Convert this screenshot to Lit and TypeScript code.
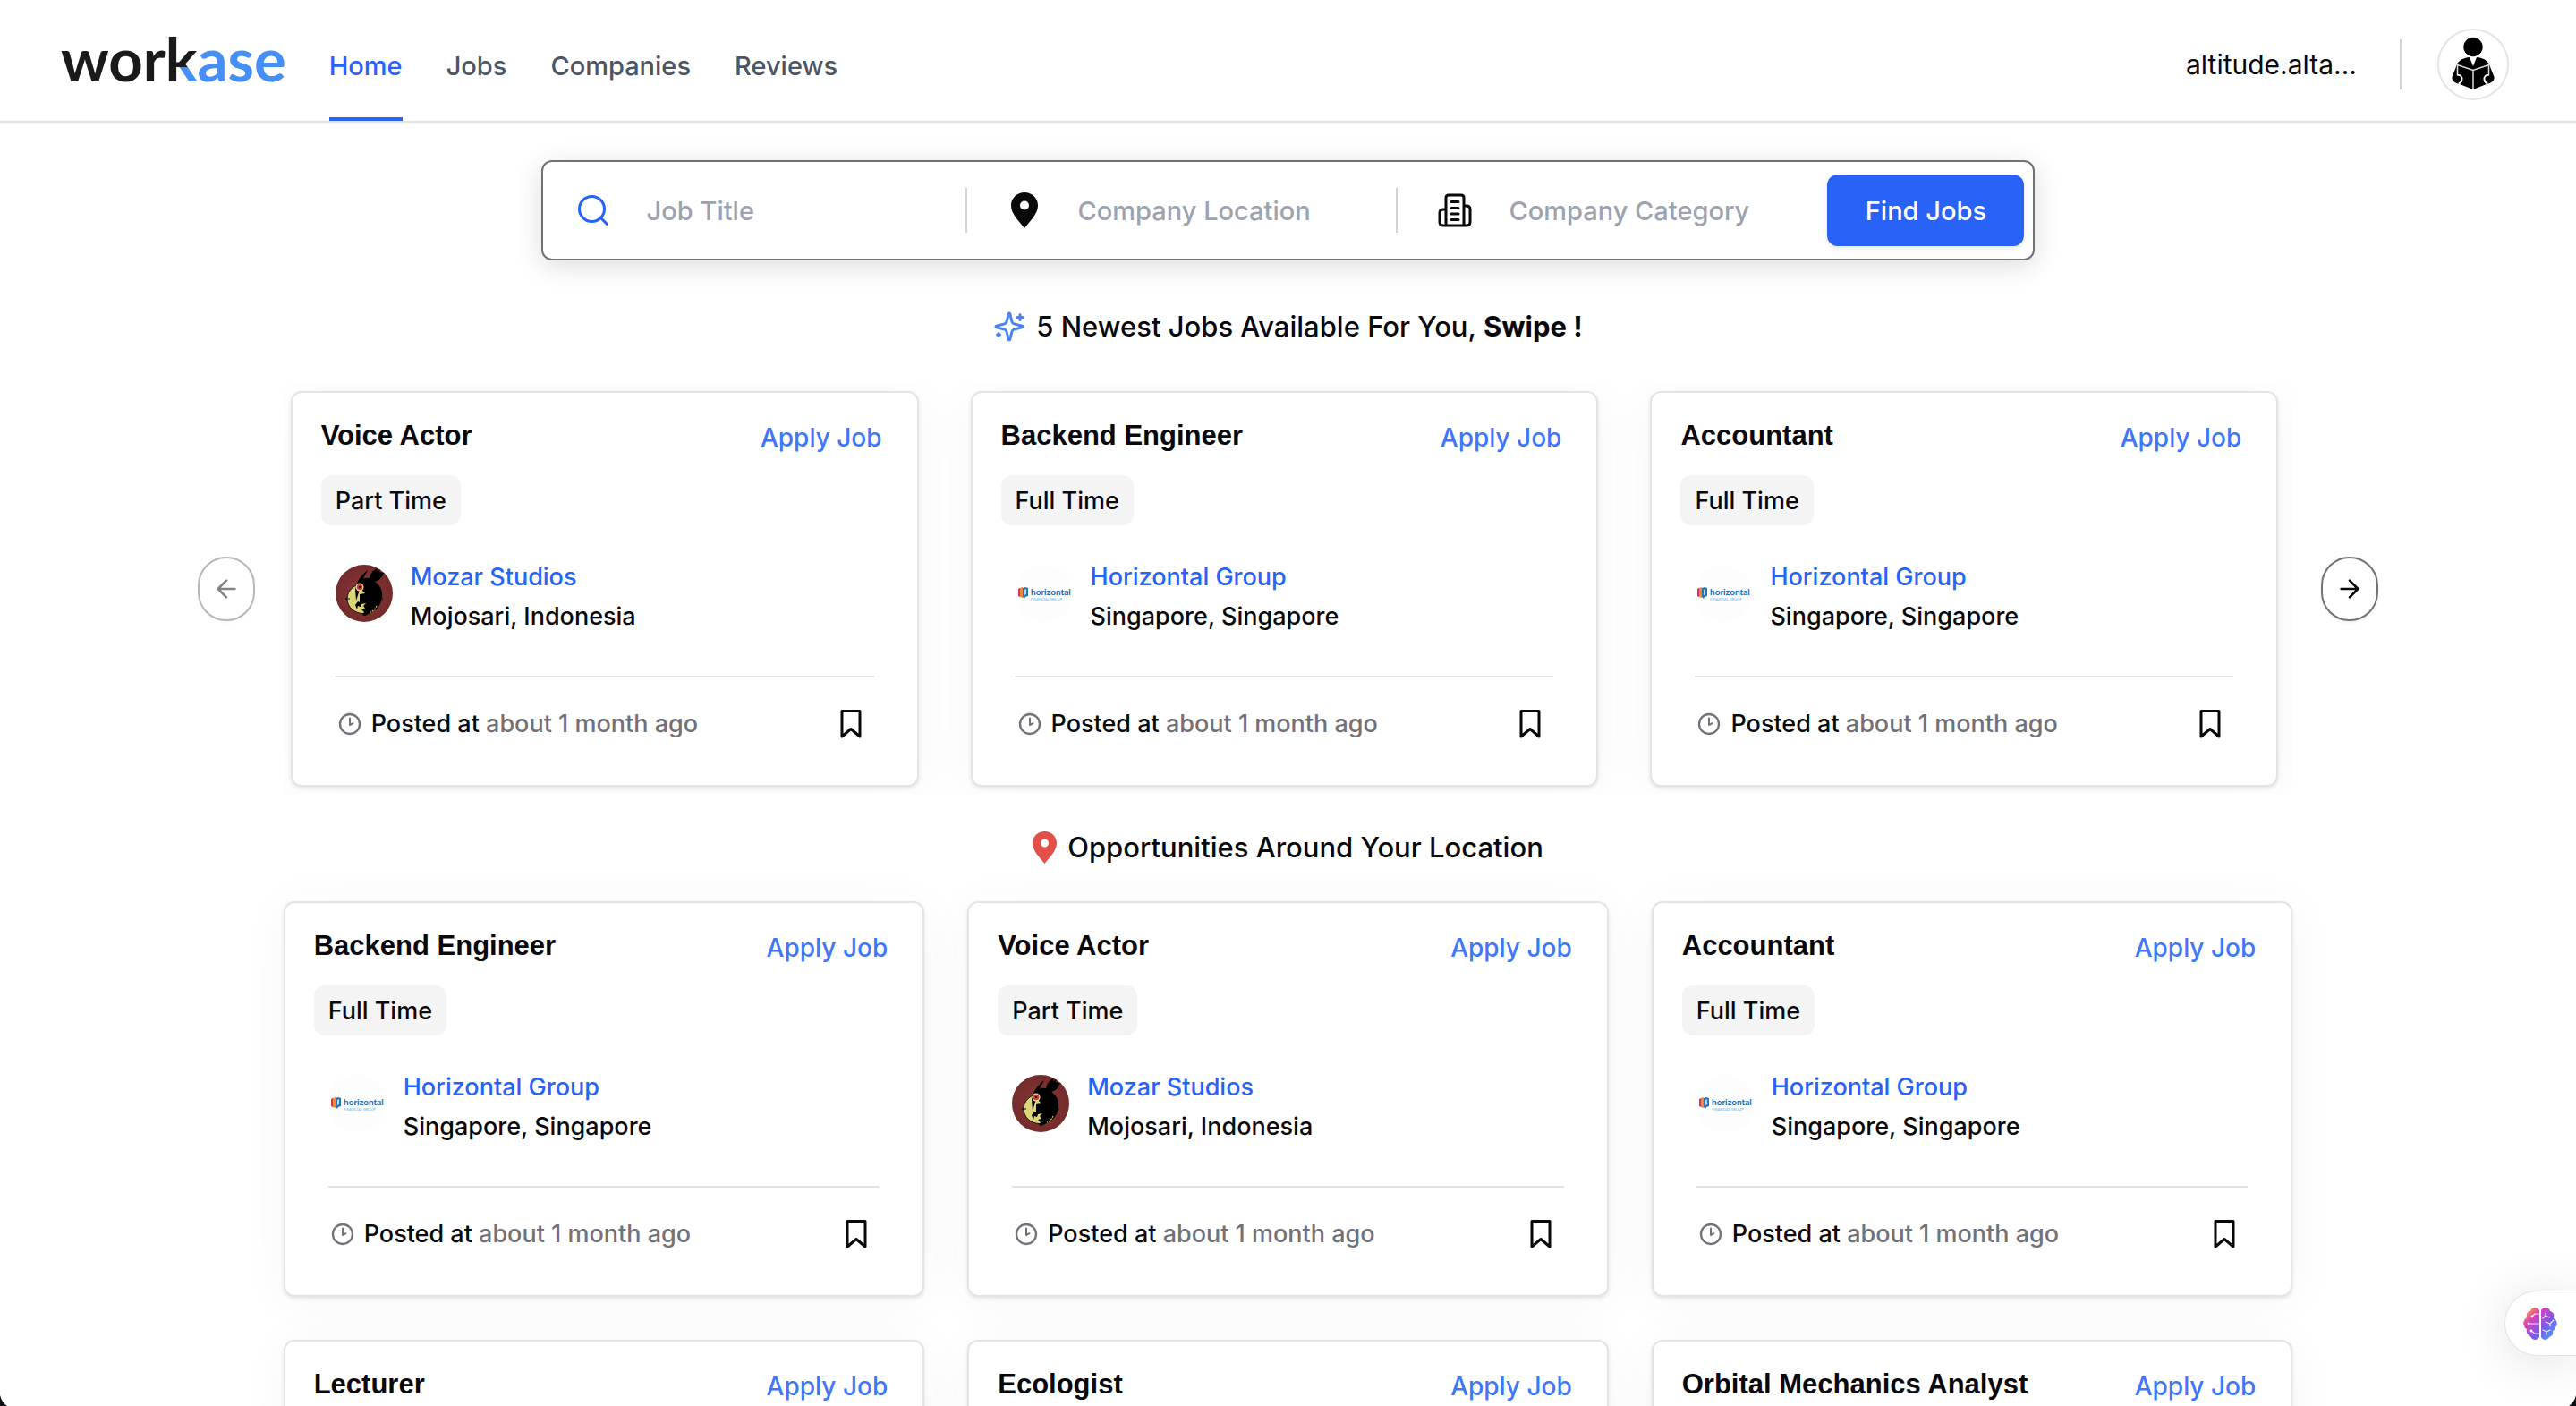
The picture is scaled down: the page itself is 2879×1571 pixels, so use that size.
import { LitElement, html, svg, css, nothing } from "lit";
import { customElement, property, state } from "lit/decorators.js";
import { classMap } from "lit/directives/class-map.js";

interface Job {
  title: string;
  type: string;
  company: string;
  place: string;
  logo: "mozar" | "horizontal";
}

const voiceActor: Job = { title: "Voice Actor", type: "Part Time", company: "Mozar Studios", place: "Mojosari, Indonesia", logo: "mozar" };
const horizontalJob = (title: string): Job => ({
  title,
  type: "Full Time",
  company: "Horizontal Group",
  place: "Singapore, Singapore",
  logo: "horizontal",
});

const newest: Job[] = [voiceActor, horizontalJob("Backend Engineer"), horizontalJob("Accountant")];
const nearby: Job[] = [
  horizontalJob("Backend Engineer"),
  voiceActor,
  horizontalJob("Accountant"),
  horizontalJob("Lecturer"),
  horizontalJob("Ecologist"),
  horizontalJob("Orbital Mechanics Analyst"),
];

const mozarLogo = html`<svg class="logo" width="64" height="64" viewBox="0 0 64 64" aria-hidden="true">
  <defs>
    <radialGradient id="red"><stop offset="0" stop-color="#8c3a37" /><stop offset="1" stop-color="#732b2b" /></radialGradient>
  </defs>
  <circle cx="32" cy="32" r="32" fill="url(#red)" />
  <ellipse cx="31" cy="38" rx="18" ry="16.5" fill="#ddd676" stroke="#14100a" stroke-width="1" />
  <path d="M36 6C29 11 24 18 22 27l1 13 3-9 2-9c2-5 5-10 8-16z" fill="#000" />
  <path d="M38 15c1-6 6-11 9-11l-1 3 4-2-1 3 5 1c-2 6-6 9-10 10 6 4 9 10 8 18-1 8-6 13-11 16l-8 4-3-1 2-3-3-3 4-1-2-3 3-3-5 1-1 3-3-1-1 4-2-5 3-4 2 1v-9l6-1-4-4 1-5-3-3c2-4 6-6 10-5z" fill="#000" />
  <path d="M46 46c-1 3-4 6-7 7" stroke="#c9c264" stroke-width="1.200" stroke-dasharray="2 1" fill="none" />
  <circle cx="27" cy="25" r="4.500" fill="#e9d9b0" />
  <circle cx="27" cy="25" r="3.200" fill="#d2402a" />
  <circle cx="27" cy="25" r="1.300" fill="#1b0b08" />
  <path d="M11 38h5M50 38h3" stroke="#000" stroke-width="1" />
</svg>`;

const horizontalLogo = html`<svg class="logo" width="64" height="64" viewBox="0 0 64 64" aria-hidden="true">
  <circle cx="32" cy="32" r="32" fill="#fdfdfd" />
  <path d="M3 27l2-1v10l-2-1z" fill="#d8315b" />
  <path d="M5 26l3-1v12l-3-1z" fill="#f0883a" />
  <path d="M8 26l3-1 3 1v9l-3 1-1 2-2-2z" fill="#2a73b8" />
  <path d="M10 28l2-1v6l-2 1z" fill="#bcdcf2" />
  <text x="17" y="34" font-family="Lato, sans-serif" font-size="10" font-weight="700" fill="#1f6bb0">horizontal</text>
  <text x="17" y="40" font-family="Lato, sans-serif" font-size="4" font-weight="400" fill="#6fb3dd">FINANCIAL GROUP</text>
</svg>`;

const clockIcon = html`<svg width="32" height="32" viewBox="0 0 32 32" fill="none" stroke="#71717a" stroke-width="2.300" stroke-linecap="round" stroke-linejoin="round" aria-hidden="true">
  <circle cx="16" cy="16" r="11" />
  <path d="M16 9.500v7.500l3.500-1.800" stroke-width="2" />
</svg>`;

const bookmarkIcon = html`<svg width="24" height="34" viewBox="0 0 24 34" fill="none" stroke="#09090b" stroke-width="3" stroke-linejoin="round" aria-hidden="true">
  <path d="M2 2.500h20v28.500l-10-8.500-10 8.500z" />
</svg>`;

const arrow = (right: boolean) => html`<svg width="32" height="32" viewBox="0 0 24 24" fill="none" stroke="#09090b" stroke-width="2" stroke-linecap="round" stroke-linejoin="round" aria-hidden="true">
  ${right ? svg`<path d="M5 12h14M12 5l7 7-7 7" />` : svg`<path d="M19 12H5M12 19l-7-7 7-7" />`}
</svg>`;

const pinPath = "M15 0C6.500 0 0 6.500 0 14.500 0 24 8 31 15 40c7-9 15-16 15-25.500C30 6.500 23.500 0 15 0zm0 9.500a5 5 0 1 1 0 10 5 5 0 0 1 0-10z";

@customElement("job-card")
export class JobCard extends LitElement {
  @property({ attribute: false }) job!: Job;

  static styles = css`
    :host {
      display: block;
      box-sizing: border-box;
      min-width: 0;
      padding: 28px 32px 48px;
      background: #fff;
      border: 2px solid #e4e4e5;
      border-radius: 12px;
      box-shadow: 0 2px 4px rgba(0, 0, 0, 0.09), 0 6px 60px rgba(0, 0, 0, 0.04);
      font-size: 27px;
      line-height: 44px;
    }
    .head {
      display: flex;
      align-items: flex-start;
      justify-content: space-between;
      gap: 16px;
      height: 40px;
      margin-right: 7px;
    }
    .title {
      margin: 0;
      font: 700 31px/40px "Liberation Sans", Arial, sans-serif;
    }
    .apply {
      color: #3f77f9;
      font-size: 28px;
      text-decoration: none;
      white-space: nowrap;
    }
    .type {
      display: inline-block;
      margin-top: 24px;
      padding: 2px 16px 0;
      background: #f4f4f4;
      border-radius: 12px;
      line-height: 54px;
      vertical-align: top;
    }
    .inner {
      margin-top: 36px;
      padding: 0 16px;
    }
    .company {
      display: flex;
      align-items: flex-start;
      gap: 20px;
      padding-bottom: 44px;
      border-bottom: 2px solid #e4e4e5;
    }
    .logo {
      margin-top: 8px;
    }
    .who {
      display: flex;
      flex-direction: column;
    }
    .name {
      color: #2663f9;
      text-decoration: none;
    }
    .foot {
      display: flex;
      align-items: center;
      gap: 8px;
      min-height: 40px;
      padding: 32px 14px 0 0;
      line-height: 40px;
    }
    .ago {
      color: #71717a;
    }
    .save {
      display: flex;
      margin-left: auto;
      padding: 0;
      border: 0;
      background: none;
    }
  `;

  render() {
    const { title, type, company, place, logo } = this.job;
    return html`
      <div class="head">
        <h3 class="title">${title}</h3>
        <a class="apply" href="#apply">Apply Job</a>
      </div>
      <span class="type">${type}</span>
      <div class="inner">
        <div class="company">
          ${logo === "mozar" ? mozarLogo : horizontalLogo}
          <div class="who">
            <a class="name" href="#company">${company}</a>
            <span>${place}</span>
          </div>
        </div>
        <div class="foot">
          ${clockIcon}
          <span>Posted at <span class="ago">about 1 month ago</span></span>
          <button class="save" aria-label="Save job">${bookmarkIcon}</button>
        </div>
      </div>
    `;
  }
}

@customElement("app-root")
export class AppRoot extends LitElement {
  @state() private current = "Home";

  static styles = css`
    :host {
      display: block;
      height: 100vh;
      overflow-y: auto;
      scrollbar-width: none;
      background: #fff;
      color: #09090b;
      font-family: Inter, "Liberation Sans", sans-serif;
      font-size: 29px;
      font-weight: 500;
    }
    .bar {
      display: flex;
      align-items: stretch;
      height: 135px;
      padding: 0 75px 0 68px;
      border-bottom: 2px solid #e4e4e5;
    }
    .brand {
      align-self: center;
      margin-right: 48px;
      padding-bottom: 6px;
      color: #1a1a1a;
      font: 700 67px/80px Lato, sans-serif;
      text-decoration: none;
    }
    .brand-k {
      background: linear-gradient(#478ff8, #478ff8) 100% 100% / 56% 30px no-repeat #1a1a1a;
      background-clip: text;
      -webkit-background-clip: text;
      color: transparent;
    }
    .brand-end {
      color: #478ff8;
    }
    .nav {
      display: flex;
      gap: 49px;
    }
    .link {
      display: flex;
      align-items: center;
      padding-top: 16px;
      border-bottom: 4px solid transparent;
      color: #4b5563;
      text-decoration: none;
    }
    .link.on {
      border-color: #2663f9;
      color: #2663f9;
    }
    .account {
      display: flex;
      align-items: center;
      margin-left: auto;
      padding-top: 8px;
      font-size: 30px;
      font-weight: 400;
    }
    .rule {
      width: 2px;
      height: 56px;
      margin: 0 40px 0 48px;
      background: #d1d5db;
    }
    .avatar {
      display: flex;
      padding: 0;
      border: 0;
      background: none;
    }
    .search {
      display: flex;
      align-items: center;
      box-sizing: border-box;
      width: 58%;
      height: 112px;
      margin: 42px auto 0;
      padding-right: 10px;
      border: 2px solid #71717a;
      border-radius: 12px;
      background: #fff;
      box-shadow: 0 6px 30px rgba(0, 0, 0, 0.14);
    }
    .field {
      display: flex;
      flex: 1 1 auto;
      align-items: center;
      gap: 40px;
      height: 50px;
      padding-left: 36px;
    }
    .field + .field {
      padding-left: 44px;
      border-left: 2px solid #d1d5db;
    }
    .icon {
      display: flex;
      flex: none;
      justify-content: center;
      width: 40px;
    }
    .input {
      flex: 1 1 auto;
      width: 200px;
      min-width: 0;
      padding: 0;
      border: 0;
      outline: 0;
      background: none;
      color: inherit;
      font: inherit;
    }
    .input::placeholder {
      color: #9ca3af;
      opacity: 1;
    }
    .find {
      flex: none;
      width: 220px;
      height: 80px;
      border: 0;
      border-radius: 12px;
      background: #2962f6;
      box-shadow: 0 2px 6px rgba(0, 0, 0, 0.1);
      color: #fff;
      font: inherit;
    }
    .heading {
      display: flex;
      align-items: center;
      justify-content: center;
      gap: 12px;
      margin: 0;
      font-size: 31px;
      font-weight: 500;
      line-height: 40px;
    }
    .heading-new {
      margin-top: 54px;
    }
    .heading-near {
      margin-top: 40px;
    }
    .carousel {
      display: flex;
      align-items: center;
      justify-content: center;
      gap: 32px;
      margin-top: 44px;
    }
    .step {
      display: flex;
      flex: none;
      align-items: center;
      justify-content: center;
      box-sizing: border-box;
      width: 64px;
      height: 72px;
      padding: 0;
      border: 2px solid #71717a;
      border-radius: 36px;
      background: #fff;
      box-shadow: 0 2px 4px rgba(0, 0, 0, 0.06);
    }
    .step:disabled {
      opacity: 0.5;
    }
    .cards {
      display: grid;
      grid-template-columns: repeat(3, minmax(0, 1fr));
      box-sizing: border-box;
      width: 78%;
    }
    .slides {
      gap: 58px;
      overflow: hidden;
      padding: 8px 16px 8px 8px;
    }
    .near {
      gap: 48px;
      margin: 40px auto 48px;
    }
    .assistant {
      position: fixed;
      right: 0;
      bottom: 56px;
      display: flex;
      align-items: center;
      box-sizing: border-box;
      width: 80px;
      height: 73px;
      padding: 0 0 0 20px;
      border: 1px solid #e4e4e5;
      border-right: 0;
      border-radius: 37px 0 0 37px;
      background: #fff;
      box-shadow: 0 6px 60px rgba(0, 0, 0, 0.12);
    }
    .corner {
      position: fixed;
      right: 0;
      bottom: 0;
    }
    .corner.left {
      right: auto;
      left: 0;
    }
  `;

  private corner(left: boolean) {
    return html`<svg class=${classMap({ corner: true, left })} width="8" height="12" viewBox="0 0 8 12" aria-hidden="true">
      <path d=${left ? "M0 0Q2 8 8 12H0z" : "M8 0Q6 8 0 12H8z"} fill="#0b1215" />
    </svg>`;
  }

  private field(id: string, label: string, icon: unknown) {
    return html`<label class="field" for=${id}>
      <span class="icon">${icon}</span>
      <input class="input" id=${id} type="text" placeholder=${label} aria-label=${label} />
    </label>`;
  }

  render() {
    return html`
      <header class="bar">
        <a class="brand" href="#home">wor<span class="brand-k">k</span><span class="brand-end">ase</span></a>
        <nav class="nav">
          ${["Home", "Jobs", "Companies", "Reviews"].map(
            (name) => html`<a
              class=${classMap({ link: true, on: name === this.current })}
              href="#${name.toLowerCase()}"
              aria-current=${name === this.current ? "page" : nothing}
              @click=${() => (this.current = name)}
              >${name}</a
            >`,
          )}
        </nav>
        <div class="account">
          <span>altitude.alta…</span>
          <span class="rule"></span>
          <button class="avatar" aria-label="Account">
            <svg width="80" height="80" viewBox="0 0 80 80" aria-hidden="true">
              <circle cx="40" cy="40" r="39" fill="#fff" stroke="#e4e4e5" stroke-width="2" />
              <circle cx="40" cy="20.500" r="10.700" fill="#000" />
              <path d="M36 32c-6 .5-12 3-14 8l-5.500 14c-1 4 4 7.500 8.500 8L40 68l15-6c4.500-.5 9.500-4 8.500-8L58 40c-2-5-8-7.500-14-8l-4 10z" fill="#000" />
              <path d="M22.500 52V40.500L40 46.500l17.500-6V52M40 46.500V68" fill="none" stroke="#ddd" stroke-width="1.500" />
              <path d="M22 52c4-1 6 2 5.500 5s-2 4-4 4.500M58 52c-4-1-6 2-5.500 5s2 4 4 4.500" fill="none" stroke="#fff" stroke-width="1.800" />
            </svg>
          </button>
        </div>
      </header>

      <main>
        <form class="search" @submit=${(e: Event) => e.preventDefault()}>
          ${this.field(
            "title",
            "Job Title",
            html`<svg width="36" height="36" viewBox="0 0 36 36" fill="none" stroke="#2663f9" stroke-width="3" stroke-linecap="round" aria-hidden="true">
              <circle cx="16.500" cy="16.500" r="14" /><path d="M27 27l6.500 6.500" />
            </svg>`,
          )}
          ${this.field(
            "location",
            "Company Location",
            html`<svg width="30" height="40" viewBox="0 0 30 40" fill="#09090b" fill-rule="evenodd" aria-hidden="true"><path d=${pinPath} /></svg>`,
          )}
          ${this.field(
            "category",
            "Company Category",
            html`<svg width="38" height="38" viewBox="0 0 38 38" fill="none" stroke="#09090b" stroke-width="3" stroke-linecap="round" stroke-linejoin="round" aria-hidden="true">
              <path d="M9 36V5q0-3 3-3h14q3 0 3 3v31M9 18H6q-4 0-4 4v10q0 4 4 4h26q4 0 4-4V18q0-4-4-4h-3M15 9.500h8M15 16.500h8M15 23h8M15 29.500h8" />
            </svg>`,
          )}
          <button class="find" type="submit">Find Jobs</button>
        </form>

        <h2 class="heading heading-new">
          <svg width="36" height="36" viewBox="0 0 24 24" fill="none" stroke="#4a82f0" stroke-width="2" stroke-linecap="round" stroke-linejoin="round" aria-hidden="true">
            <path d="M9.937 15.500A2 2 0 0 0 8.500 14.063l-6.135-1.582a.5.5 0 0 1 0-.962L8.500 9.936A2 2 0 0 0 9.937 8.500l1.582-6.135a.5.5 0 0 1 .963 0L14.063 8.500A2 2 0 0 0 15.500 9.937l6.135 1.581a.5.5 0 0 1 0 .964L15.500 14.063a2 2 0 0 0-1.437 1.437l-1.582 6.135a.5.5 0 0 1-.963 0z" />
            <path d="M20 3v4M22 5h-4M4 17v2M5 18H3" />
          </svg>
          <span>5 Newest Jobs Available For You, <b>Swipe !</b></span>
        </h2>
        <section class="carousel" aria-label="Newest jobs">
          <button class="step" aria-label="Previous" disabled>${arrow(false)}</button>
          <div class="cards slides">${newest.map((job) => html`<job-card .job=${job}></job-card>`)}</div>
          <button class="step" aria-label="Next">${arrow(true)}</button>
        </section>

        <h2 class="heading heading-near">
          <svg width="27" height="36" viewBox="0 0 30 40" fill="#df5149" fill-rule="evenodd" aria-hidden="true"><path d=${pinPath} /></svg>
          <span>Opportunities Around Your Location</span>
        </h2>
        <section class="cards near" aria-label="Jobs near you">${nearby.map((job) => html`<job-card .job=${job}></job-card>`)}</section>
      </main>

      <button class="assistant" aria-label="Assistant">
        <svg width="38" height="36" viewBox="0 0 38 36" aria-hidden="true">
          <defs>
            <linearGradient id="brain" x1="0" y1="0" x2="1" y2="1">
              <stop offset="0.080" stop-color="#f2a33c" />
              <stop offset="0.300" stop-color="#dd40bd" />
              <stop offset="0.600" stop-color="#7a58ea" />
              <stop offset="1" stop-color="#3fb2ff" />
            </linearGradient>
          </defs>
          <path
            d="M18 3c-2-4-9-4-10 1-3 0-5 3-4 7-3 2-5 6-3 9 0 2 1 3 3 4-1 4 1 7 4 8 2 5 8 5 10 1zM20 3c2-4 9-4 10 1 4 1 5 4 4 8 4 2 5 7 2 10 0 2-1 3-3 4 1 4-1 6-4 7-2 4-7 4-9 0z"
            fill="url(#brain)"
          />
          <path d="M18 7h-5l-3 3M18 18H6M18 29h-5l-4-3M25 6v3l-3 3M25 9l4 2M25 16l5 2 4-4M30 18v3M22 25l4 2 4-2M26 27v3" fill="none" stroke="#fff" stroke-opacity="0.850" stroke-width="1.200" stroke-linecap="round" stroke-linejoin="round" />
          <circle cx="10" cy="10" r="1.400" fill="#fff" /><circle cx="6" cy="18" r="1.400" fill="#fff" /><circle cx="9" cy="26" r="1.400" fill="#fff" />
        </svg>
      </button>
      ${this.corner(true)}${this.corner(false)}
    `;
  }
}
